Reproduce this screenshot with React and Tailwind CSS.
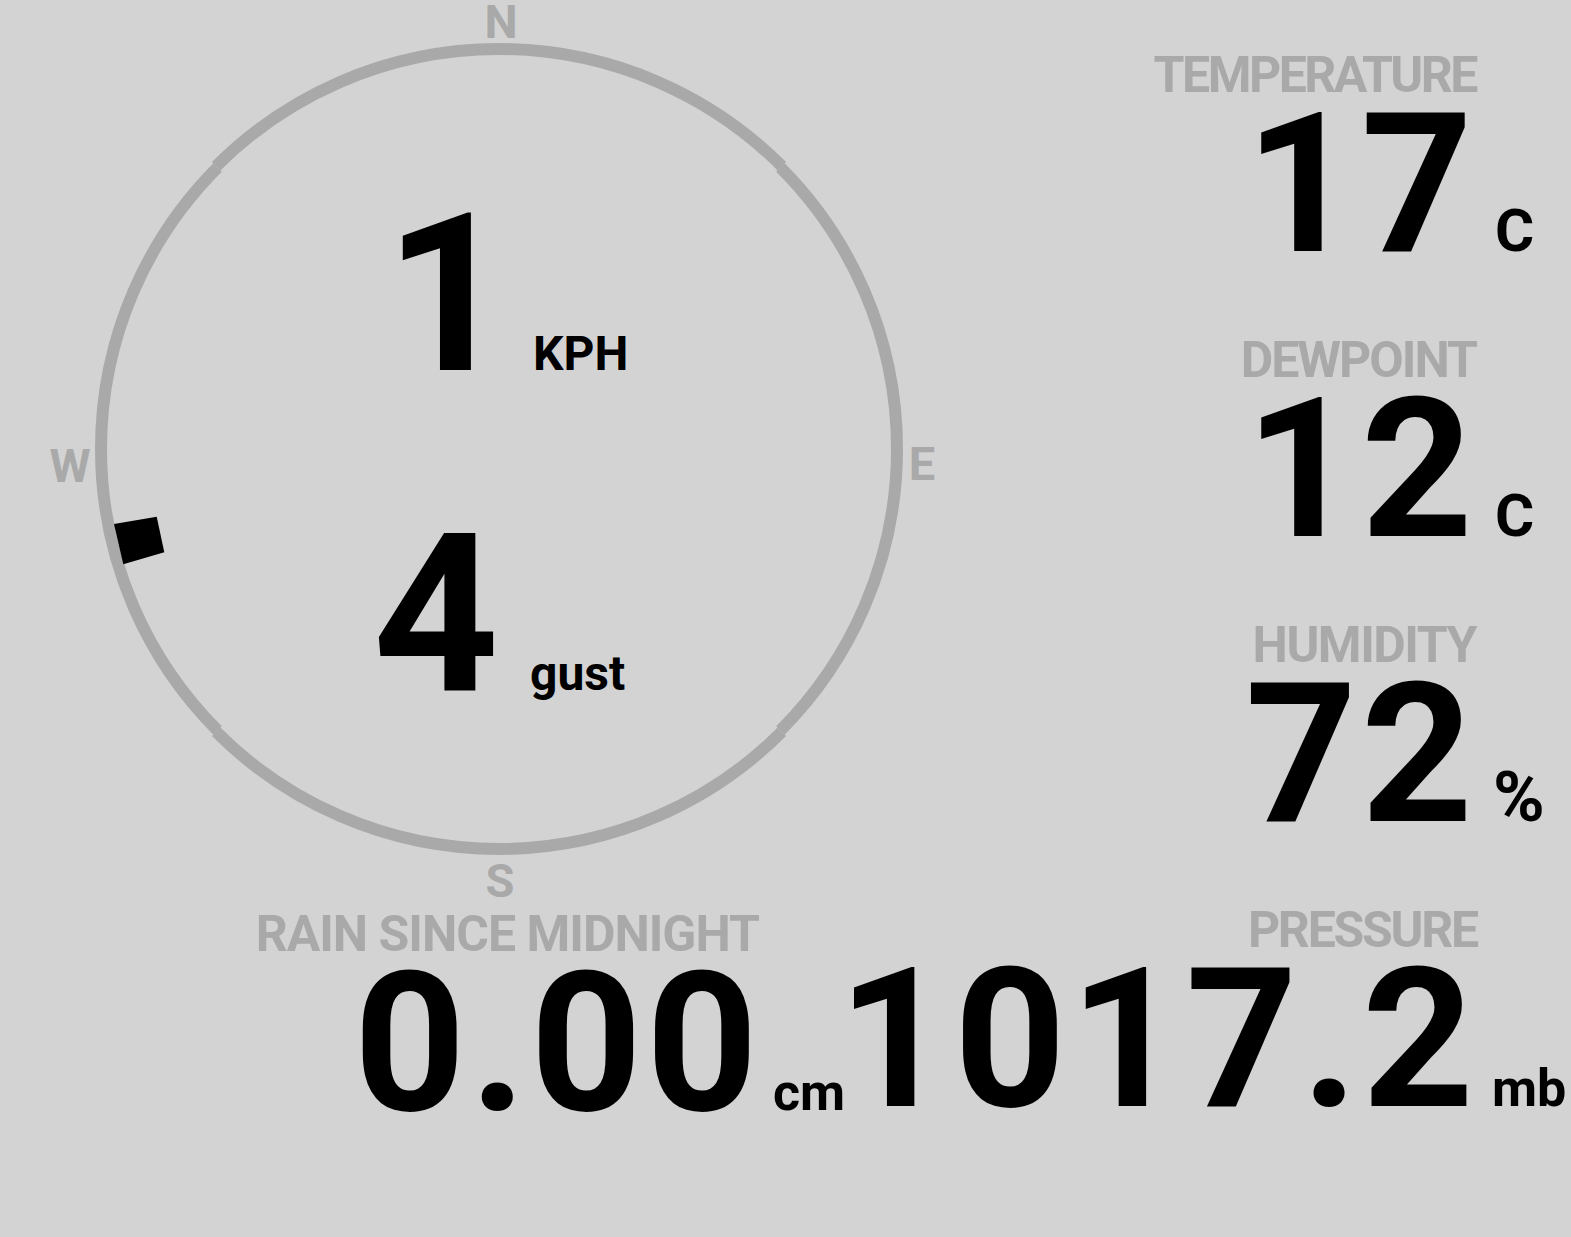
import React from "react";

const LABEL =
  "text-[50px] leading-[50px] font-bold text-[#a9a9a9] whitespace-nowrap";

function Stat({ label, value, unit, unitClass, labelClass, height }) {
  return (
    <div className={`flex flex-col items-end ${height}`}>
      <div className={`${LABEL} ${labelClass}`}>{label}</div>
      <div className="mt-[12px] flex items-baseline">
        <span className="-mr-[4px] text-[195px] leading-[146px] font-bold tracking-[4px]">
          {value}
        </span>
        <span className={`font-bold ${unitClass}`}>{unit}</span>
      </div>
    </div>
  );
}

// ring drawn as four quarter arcs, sides sit a touch inside the top/bottom ones
function Ring() {
  const cx = 499;
  const cy = 449;
  const arc = (r, a0, a1) => {
    const p = (a) => [cx + r * Math.cos(a), cy + r * Math.sin(a)];
    const [x0, y0] = p(a0);
    const [x1, y1] = p(a1);
    return `M${x0} ${y0} A${r} ${r} 0 0 1 ${x1} ${y1}`;
  };
  const q = Math.PI / 4;
  return (
    <g fill="none" stroke="#a9a9a9" strokeWidth="12">
      <path d={arc(400, -3 * q, -q)} />
      <path d={arc(398, -q, q)} />
      <path d={arc(400, q, 3 * q)} />
      <path d={arc(398, 3 * q, 5 * q)} />
    </g>
  );
}

function Compass() {
  return (
    <div className="relative h-[905px] w-[945px] shrink-0">
      <svg
        className="absolute inset-0 overflow-visible"
        width="945"
        height="905"
        viewBox="0 0 945 905"
      >
        <Ring />
        <g fill="#a9a9a9" fontFamily="Roboto, sans-serif" fontWeight="700" fontSize="47" textAnchor="middle">
          <text x="501" y="38">N</text>
          <text x="922" y="480">E</text>
          <text x="500" y="897">S</text>
          <text x="70" y="482">W</text>
        </g>
        {/* wind direction marker */}
        <polygon points="114,524 156.7,516.7 164.3,552.3 123.3,564.3" fill="#000" />
      </svg>

      <div className="relative flex flex-col items-center pt-[185px] gap-[100px]">
        <div className="flex items-baseline pl-[68px]">
          <span className="text-[220px] leading-[220px] font-bold">1</span>
          <span className="ml-[22px] text-[48px] font-bold">KPH</span>
        </div>
        <div className="flex items-baseline pl-[53px]">
          <span className="text-[220px] leading-[220px] font-bold">4</span>
          <span className="ml-[31px] text-[48px] font-bold">gust</span>
        </div>
      </div>
    </div>
  );
}

export default function App() {
  return (
    <div className="min-h-[1237px] w-full bg-[#d3d3d3] text-black font-['Roboto',sans-serif]">
      {/* top row: wind + stats */}
      <div className="flex">
        <Compass />
        <div className="flex flex-1 flex-col pt-[50px]">
          <Stat
            height="h-[285px]"
            label="TEMPERATURE"
            labelClass="pr-[95px] tracking-[-0.05em]"
            value="17"
            unit="C"
            unitClass="w-[98px] pl-[22px] text-[60px]"
          />
          <Stat
            height="h-[285px]"
            label="DEWPOINT"
            labelClass="pr-[95px] tracking-[-0.04em]"
            value="12"
            unit="C"
            unitClass="w-[98px] pl-[22px] text-[60px]"
          />
          <Stat
            height="h-[285px]"
            label="HUMIDITY"
            labelClass="pr-[95px] tracking-[-0.03em]"
            value="72"
            unit="%"
            unitClass="w-[98px] pl-[20px] text-[70px]"
          />
        </div>
      </div>

      {/* bottom row: rain + pressure */}
      <div className="flex">
        <div className="w-[838px] shrink-0 pt-[4px]">
          <Stat
            height=""
            label="RAIN SINCE MIDNIGHT"
            labelClass="pr-[79px] tracking-[-0.02em]"
            value="0.00"
            unit="cm"
            unitClass="w-[80px] pl-[15px] text-[52px]"
          />
        </div>
        <div className="flex-1">
          <Stat
            height=""
            label="PRESSURE"
            labelClass="pr-[95px] tracking-[-0.045em]"
            value="1017.2"
            unit="mb"
            unitClass="w-[98px] pl-[18px] text-[52px]"
          />
        </div>
      </div>
    </div>
  );
}
